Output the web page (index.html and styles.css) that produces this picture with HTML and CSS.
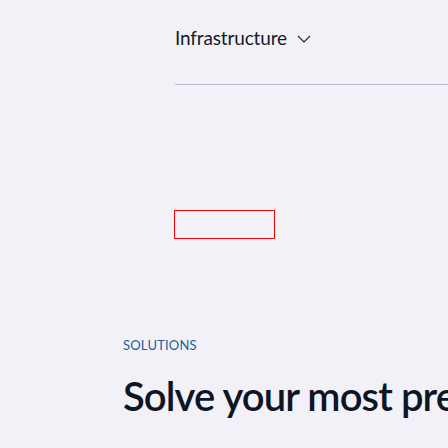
FILE: index.html
```html
<!DOCTYPE html>
<html lang="en">
<head>
<meta charset="utf-8">
<title>Solutions</title>
<link rel="stylesheet" href="styles.css">
</head>
<body>
<div class="page">
  <nav class="nav">
    <button class="nav-item">
      <span class="nav-label">Infrastructure</span>
      <svg class="chev" width="14" height="8" viewBox="0 0 14 8" aria-hidden="true"><path d="M1 1l6 6 6-6" fill="none" stroke="#1b2433" stroke-width="1.1"/></svg>
    </button>
  </nav>
  <div class="focus-wrap">
    <div class="focus-box"></div>
  </div>
  <section class="solutions">
    <p class="eyebrow">SOLUTIONS</p>
    <h1 class="headline">Solve your most pressing challenges</h1>
  </section>
</div>
</body>
</html>
```
FILE: styles.css
```css
html, body {
  margin: 0;
  padding: 0;
  background: #f1f1f7;
  overflow: hidden;
}
.page {
  width: 448px;
  height: 448px;
  overflow: hidden;
  font-family: "Lato", "Open Sans", sans-serif;
}
.nav {
  margin-left: 175px;
  padding-top: 26px;
  height: 58px;
  border-bottom: 1px solid #b6bed0;
  box-sizing: content-box;
}
.nav-item {
  display: flex;
  align-items: center;
  gap: 10px;
  padding: 0;
  border: 0;
  background: none;
  font: inherit;
  cursor: pointer;
}
.nav-label {
  font-size: 19px;
  line-height: 24px;
  letter-spacing: -0.15px;
  color: #141b2a;
}
.chev {
  margin-top: 2px;
}
.focus-wrap {
  padding-left: 174px;
  padding-top: 125px;
}
.focus-box {
  width: 99px;
  height: 27px;
  border: 1px solid #ff0000;
}
.solutions {
  padding-left: 123px;
  padding-top: 97px;
  white-space: nowrap;
  overflow: hidden;
}
.eyebrow {
  margin: 0;
  font-size: 13px;
  line-height: 18px;
  letter-spacing: 0.2px;
  color: #1c5d9e;
}
.headline {
  margin: 18px 0 0;
  font-size: 40px;
  line-height: 48px;
  font-weight: 600;
  color: #0e1626;
  letter-spacing: -0.9px;
}
```
